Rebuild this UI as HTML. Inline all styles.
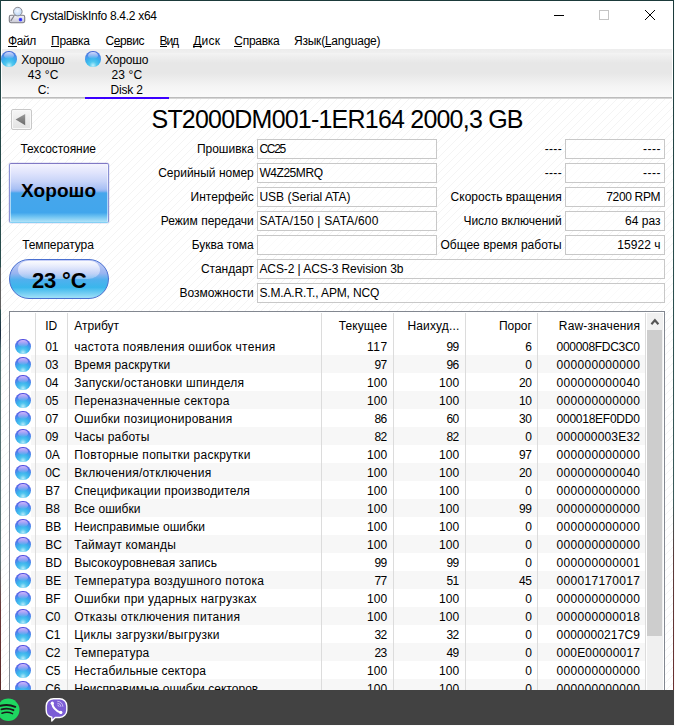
<!DOCTYPE html><html><head><meta charset="utf-8"><style>
*{margin:0;padding:0;box-sizing:border-box}
html,body{width:675px;height:726px;overflow:hidden;background:#fff;font-family:"Liberation Sans",sans-serif;}
.t{position:absolute;white-space:pre;color:#000;font-family:"Liberation Sans",sans-serif;}
</style></head><body><div style="position:absolute;left:0px;top:0px;width:674px;height:1px;background:#1b3a3a"></div>
<div style="position:absolute;left:0px;top:0px;width:1px;height:690px;background:linear-gradient(#1f4444 0px,#2a4e4e 267px,#606060 268px,#606060 309px,#2a5050 310px,#1a2a40 335px,#4a6a6a 350px,#5a7272 560px,#6a3434 610px,#5a2a2a 690px)"></div>
<div style="position:absolute;left:673px;top:0px;width:1px;height:690px;background:linear-gradient(#1b3a3a 0px,#2b4f4f 300px,#3a5a5a 500px,#5a3a3a 560px,#6a3030 690px)"></div>
<svg style="position:absolute;left:5px;top:5px" width="24" height="24" viewBox="0 0 24 24">
<defs><linearGradient id="dk" x1="0" y1="0" x2="0" y2="1"><stop offset="0" stop-color="#f4f4f8"/><stop offset="1" stop-color="#c8c8d4"/></linearGradient>
<radialGradient id="gl" cx="0.45" cy="0.4" r="0.6"><stop offset="0" stop-color="#f4f8ff"/><stop offset="1" stop-color="#b8d4f4"/></radialGradient></defs>
<rect x="4.3" y="10.3" width="15.4" height="7.4" rx="1.6" fill="url(#dk)" stroke="#7c7c84" stroke-width="1.1"/>
<defs><radialGradient id="bd"><stop offset="0" stop-color="#2020ff"/><stop offset="0.6" stop-color="#4848ff"/><stop offset="1" stop-color="#a0a8ff" stop-opacity="0.3"/></radialGradient></defs><circle cx="15.5" cy="14.6" r="2.3" fill="url(#bd)"/>
<line x1="9" y1="11" x2="5.8" y2="15.8" stroke="#808088" stroke-width="1.2"/>
<circle cx="12.8" cy="6.6" r="4.3" fill="url(#gl)" stroke="#8a8a90" stroke-width="1"/>
</svg>
<div class="t" style="left:30.50px;top:8.64px;font-size:12px;line-height:15px;letter-spacing:-0.288px;">CrystalDiskInfo 8.4.2 x64</div>
<div style="position:absolute;left:554px;top:15px;width:10px;height:1px;background:#000"></div>
<div style="position:absolute;left:599px;top:10px;width:10px;height:10px;border:1px solid #c4c4c4"></div>
<svg style="position:absolute;left:644px;top:9px" width="12" height="12" viewBox="0 0 12 12"><path d="M1 1L11 11M11 1L1 11" stroke="#000" stroke-width="1"/></svg>
<div class="t" style="left:8.10px;top:34.44px;font-size:12px;line-height:15px;letter-spacing:-0.433px;">Файл</div>
<div class="t" style="left:51.10px;top:34.44px;font-size:12px;line-height:15px;letter-spacing:-0.340px;">Правка</div>
<div class="t" style="left:105.60px;top:34.44px;font-size:12px;line-height:15px;letter-spacing:-0.460px;">Сервис</div>
<div class="t" style="left:159.60px;top:34.44px;font-size:12px;line-height:15px;letter-spacing:-1.200px;">Вид</div>
<div class="t" style="left:193.30px;top:34.44px;font-size:12px;line-height:15px;letter-spacing:0.167px;">Диск</div>
<div class="t" style="left:234.30px;top:34.44px;font-size:12px;line-height:15px;letter-spacing:-0.267px;">Справка</div>
<div class="t" style="left:294.00px;top:34.44px;font-size:12px;line-height:15px;letter-spacing:-0.223px;">Язык(Language)</div>
<div style="position:absolute;left:8px;top:46px;width:9px;height:1px;background:#000"></div>
<div style="position:absolute;left:51px;top:46px;width:8px;height:1px;background:#000"></div>
<div style="position:absolute;left:114px;top:46px;width:7px;height:1px;background:#000"></div>
<div style="position:absolute;left:160px;top:46px;width:7px;height:1px;background:#000"></div>
<div style="position:absolute;left:193px;top:46px;width:9px;height:1px;background:#000"></div>
<div style="position:absolute;left:234px;top:46px;width:8px;height:1px;background:#000"></div>
<div style="position:absolute;left:325px;top:46px;width:6px;height:1px;background:#000"></div>
<div style="position:absolute;left:2px;top:49px;width:670px;height:48px;background:linear-gradient(#ededed 0px,#efefef 3.5px,#f3f3f3 4.5px,#eeeeee 8px,#e7e7e7 14px,#e7e7e7 24px,#f5f5f5 38px,#fafafa 48px)"></div>
<div style="position:absolute;left:2px;top:97px;width:670px;height:1px;background:#bdbdbd"></div>
<div style="position:absolute;left:2px;top:98px;width:670px;height:1px;background:#d6d6d6"></div>
<div style="position:absolute;left:85px;top:97px;width:84px;height:2px;background:#3c00ff"></div>
<div style="position:absolute;left:1.3px;top:51.3px;width:15.6px;height:15.6px;border-radius:50%;background:radial-gradient(circle at 50% 90%, #c0f0fc 0%, #50c8ee 22%, #38b2ec 45%, #4a98ec 62%, #4a78e0 80%, #3a50c4 92%, #4a60d0 100%);"><div style="position:absolute;left:18%;top:6%;width:64%;height:46%;border-radius:50%;background:linear-gradient(#d4dcfc,rgba(170,190,250,0))"></div></div>
<div style="position:absolute;left:85.2px;top:51.3px;width:15.6px;height:15.6px;border-radius:50%;background:radial-gradient(circle at 50% 90%, #c0f0fc 0%, #50c8ee 22%, #38b2ec 45%, #4a98ec 62%, #4a78e0 80%, #3a50c4 92%, #4a60d0 100%);"><div style="position:absolute;left:18%;top:6%;width:64%;height:46%;border-radius:50%;background:linear-gradient(#d4dcfc,rgba(170,190,250,0))"></div></div>
<div class="t" style="left:21.30px;top:52.54px;font-size:12px;line-height:15px;letter-spacing:-0.180px;">Хорошо</div>
<div class="t" style="left:27.80px;top:67.54px;font-size:12px;line-height:15px;letter-spacing:0.100px;">43 °C</div>
<div class="t" style="left:37.70px;top:82.74px;font-size:12px;line-height:15px;">C:</div>
<div class="t" style="left:104.90px;top:52.54px;font-size:12px;line-height:15px;letter-spacing:-0.120px;">Хорошо</div>
<div class="t" style="left:111.40px;top:67.54px;font-size:12px;line-height:15px;letter-spacing:0.175px;">23 °C</div>
<div class="t" style="left:110.60px;top:82.74px;font-size:12px;line-height:15px;letter-spacing:-0.220px;">Disk 2</div>
<svg style="position:absolute;left:1px;top:99px" width="672" height="591"><defs><pattern id="stp" width="8" height="8" patternUnits="userSpaceOnUse"><path d="M7 0h1v1h-1zM6 1h1v1h-1zM5 2h1v1h-1zM4 3h1v1h-1zM3 4h1v1h-1zM2 5h1v1h-1zM1 6h1v1h-1zM0 7h1v1h-1z" fill="#f4f4f4"/></pattern></defs><rect width="672" height="591" fill="url(#stp)"/></svg>
<div style="position:absolute;left:11px;top:109px;width:21px;height:21px;background:linear-gradient(#f6f6f6,#e2e2e2);border:1px solid #c8c8c8;border-radius:2px;box-shadow:inset 0 0 0 1px #f8f8f8"></div>
<svg style="position:absolute;left:11px;top:109px" width="21" height="21"><defs><linearGradient id="tg" x1="0" y1="0" x2="0" y2="1"><stop offset="0" stop-color="#9a9a9a"/><stop offset="1" stop-color="#6a6a6a"/></linearGradient></defs><path d="M4.6 10.6L14.2 5V16.2Z" fill="url(#tg)"/></svg>
<div class="t" style="left:151.50px;top:103.84px;font-size:25px;line-height:31px;letter-spacing:-0.789px;">ST2000DM001-1ER164 2000,3 GB</div>
<div class="t" style="left:20.40px;top:142.14px;font-size:12px;line-height:15px;letter-spacing:-0.064px;">Техсостояние</div>
<div style="position:absolute;left:9px;top:163px;width:100px;height:60px;border:1px solid;border-radius:2px;box-shadow:inset 1px 0 0 rgba(255,255,255,0.55),inset -1px 0 0 rgba(255,255,255,0.55),0 0 0 0.5px rgba(140,140,210,0.35);border-color:#8078c4 #8a90d4 #84d0f4 #8a90d4;background:linear-gradient(#f4f4fe 0%,#e0e4fc 15%,#c8d4f8 30%,#a8c0f4 43%,#90b4f2 46.5%,#46a6ec 50%,#42a6ec 84%,#70c4f2 91%,#b0e2f8 100%)"></div>
<div class="t" style="left:21.10px;top:179.22px;font-size:19px;line-height:24px;font-weight:700;letter-spacing:0.060px;">Хорошо</div>
<div class="t" style="left:22.15px;top:238.04px;font-size:12px;line-height:15px;letter-spacing:-0.100px;">Температура</div>
<div style="position:absolute;left:9px;top:259px;width:100px;height:40px;border:1px solid #4a70d0;border-radius:20px;background:linear-gradient(#c8d0f8 0%,#98b4f0 35%,#50b0ee 52%,#3ab6ec 72%,#a0e0f8 100%)"></div>
<div style="position:absolute;left:18px;top:260.5px;width:82px;height:18px;border-radius:9px 9px 12px 12px/9px 9px 9px 9px;background:linear-gradient(rgba(255,255,255,0.9),rgba(240,242,255,0.55) 60%,rgba(220,228,252,0.35))"></div>
<div class="t" style="left:32.00px;top:267.28px;font-size:22px;line-height:28px;font-weight:700;letter-spacing:-0.175px;">23 °C</div>
<div class="t" style="left:196.90px;top:142.44px;font-size:12px;line-height:15px;">Прошивка</div>
<div style="position:absolute;left:257px;top:139px;width:180px;height:20px;border:1px solid #c8c8c8;background:rgba(255,255,255,0.55)"></div>
<div style="position:absolute;left:565px;top:139px;width:100px;height:20px;border:1px solid #c8c8c8;background:rgba(255,255,255,0.55)"></div>
<div class="t" style="left:544.70px;top:142.44px;font-size:12px;line-height:15px;letter-spacing:0.333px;">----</div>
<div class="t" style="left:642.90px;top:142.44px;font-size:12px;line-height:15px;letter-spacing:0.567px;">----</div>
<div class="t" style="left:259.40px;top:142.44px;font-size:12px;line-height:15px;letter-spacing:-1.267px;">CC25</div>
<div class="t" style="left:158.20px;top:166.44px;font-size:12px;line-height:15px;">Серийный номер</div>
<div style="position:absolute;left:257px;top:163px;width:180px;height:20px;border:1px solid #c8c8c8;background:rgba(255,255,255,0.55)"></div>
<div style="position:absolute;left:565px;top:163px;width:100px;height:20px;border:1px solid #c8c8c8;background:rgba(255,255,255,0.55)"></div>
<div class="t" style="left:544.70px;top:166.44px;font-size:12px;line-height:15px;letter-spacing:0.333px;">----</div>
<div class="t" style="left:642.90px;top:166.44px;font-size:12px;line-height:15px;letter-spacing:0.567px;">----</div>
<div class="t" style="left:259.40px;top:166.44px;font-size:12px;line-height:15px;letter-spacing:-0.443px;">W4Z25MRQ</div>
<div class="t" style="left:190.60px;top:190.44px;font-size:12px;line-height:15px;">Интерфейс</div>
<div style="position:absolute;left:257px;top:187px;width:180px;height:20px;border:1px solid #c8c8c8;background:rgba(255,255,255,0.55)"></div>
<div style="position:absolute;left:565px;top:187px;width:100px;height:20px;border:1px solid #c8c8c8;background:rgba(255,255,255,0.55)"></div>
<div class="t" style="left:450.60px;top:190.44px;font-size:12px;line-height:15px;">Скорость вращения</div>
<div class="t" style="left:606.20px;top:190.44px;font-size:12px;line-height:15px;letter-spacing:-0.329px;">7200 RPM</div>
<div class="t" style="left:259.40px;top:190.44px;font-size:12px;line-height:15px;letter-spacing:0.020px;">USB (Serial ATA)</div>
<div class="t" style="left:160.80px;top:214.44px;font-size:12px;line-height:15px;">Режим передачи</div>
<div style="position:absolute;left:257px;top:211px;width:180px;height:20px;border:1px solid #c8c8c8;background:rgba(255,255,255,0.55)"></div>
<div style="position:absolute;left:565px;top:211px;width:100px;height:20px;border:1px solid #c8c8c8;background:rgba(255,255,255,0.55)"></div>
<div class="t" style="left:463.40px;top:214.44px;font-size:12px;line-height:15px;">Число включений</div>
<div class="t" style="left:625.10px;top:214.44px;font-size:12px;line-height:15px;letter-spacing:0.020px;">64 раз</div>
<div class="t" style="left:259.40px;top:214.44px;font-size:12px;line-height:15px;letter-spacing:0.189px;">SATA/150 | SATA/600</div>
<div class="t" style="left:191.70px;top:238.44px;font-size:12px;line-height:15px;">Буква тома</div>
<div style="position:absolute;left:257px;top:235px;width:180px;height:20px;border:1px solid #c8c8c8;background:rgba(255,255,255,0.55)"></div>
<div style="position:absolute;left:565px;top:235px;width:100px;height:20px;border:1px solid #c8c8c8;background:rgba(255,255,255,0.55)"></div>
<div class="t" style="left:440.50px;top:238.44px;font-size:12px;line-height:15px;">Общее время работы</div>
<div class="t" style="left:617.20px;top:238.44px;font-size:12px;line-height:15px;letter-spacing:0.067px;">15922 ч</div>
<div class="t" style="left:200.90px;top:262.44px;font-size:12px;line-height:15px;">Стандарт</div>
<div style="position:absolute;left:257px;top:259px;width:408px;height:20px;border:1px solid #c8c8c8;background:rgba(255,255,255,0.55)"></div>
<div class="t" style="left:259.40px;top:262.44px;font-size:12px;line-height:15px;letter-spacing:-0.075px;">ACS-2 | ACS-3 Revision 3b</div>
<div class="t" style="left:179.40px;top:286.44px;font-size:12px;line-height:15px;">Возможности</div>
<div style="position:absolute;left:257px;top:283px;width:408px;height:20px;border:1px solid #c8c8c8;background:rgba(255,255,255,0.55)"></div>
<div class="t" style="left:259.40px;top:286.44px;font-size:12px;line-height:15px;letter-spacing:-0.142px;">S.M.A.R.T., APM, NCQ</div>
<div style="position:absolute;left:9px;top:311px;width:656px;height:379px;border:1px solid #828790;border-bottom:none;background:#fff"></div>
<div style="position:absolute;left:35px;top:313px;width:1px;height:377px;background:#dcdcdc"></div>
<div style="position:absolute;left:67px;top:313px;width:1px;height:377px;background:#dcdcdc"></div>
<div style="position:absolute;left:321px;top:313px;width:1px;height:377px;background:#dcdcdc"></div>
<div style="position:absolute;left:393px;top:313px;width:1px;height:377px;background:#dcdcdc"></div>
<div style="position:absolute;left:465px;top:313px;width:1px;height:377px;background:#dcdcdc"></div>
<div style="position:absolute;left:537px;top:313px;width:1px;height:377px;background:#dcdcdc"></div>
<div style="position:absolute;left:645px;top:313px;width:1px;height:377px;background:#dcdcdc"></div>
<div class="t" style="left:45.20px;top:318.94px;font-size:12px;line-height:15px;">ID</div>
<div class="t" style="left:74.30px;top:318.94px;font-size:12px;line-height:15px;">Атрибут</div>
<div class="t" style="left:338.70px;top:318.94px;font-size:12px;line-height:15px;letter-spacing:0.117px;">Текущее</div>
<div class="t" style="left:407.50px;top:318.94px;font-size:12px;line-height:15px;letter-spacing:0.138px;">Наихуд...</div>
<div class="t" style="left:498.90px;top:318.94px;font-size:12px;line-height:15px;">Порог</div>
<div class="t" style="left:558.80px;top:318.94px;font-size:12px;line-height:15px;letter-spacing:0.164px;">Raw-значения</div>
<div style="position:absolute;left:31px;top:355px;width:614px;height:18px;background:#f7f7f7"></div>
<div style="position:absolute;left:35px;top:355px;width:1px;height:18px;background:#dcdcdc"></div>
<div style="position:absolute;left:67px;top:355px;width:1px;height:18px;background:#dcdcdc"></div>
<div style="position:absolute;left:321px;top:355px;width:1px;height:18px;background:#dcdcdc"></div>
<div style="position:absolute;left:393px;top:355px;width:1px;height:18px;background:#dcdcdc"></div>
<div style="position:absolute;left:465px;top:355px;width:1px;height:18px;background:#dcdcdc"></div>
<div style="position:absolute;left:537px;top:355px;width:1px;height:18px;background:#dcdcdc"></div>
<div style="position:absolute;left:31px;top:391px;width:614px;height:18px;background:#f7f7f7"></div>
<div style="position:absolute;left:35px;top:391px;width:1px;height:18px;background:#dcdcdc"></div>
<div style="position:absolute;left:67px;top:391px;width:1px;height:18px;background:#dcdcdc"></div>
<div style="position:absolute;left:321px;top:391px;width:1px;height:18px;background:#dcdcdc"></div>
<div style="position:absolute;left:393px;top:391px;width:1px;height:18px;background:#dcdcdc"></div>
<div style="position:absolute;left:465px;top:391px;width:1px;height:18px;background:#dcdcdc"></div>
<div style="position:absolute;left:537px;top:391px;width:1px;height:18px;background:#dcdcdc"></div>
<div style="position:absolute;left:31px;top:427px;width:614px;height:18px;background:#f7f7f7"></div>
<div style="position:absolute;left:35px;top:427px;width:1px;height:18px;background:#dcdcdc"></div>
<div style="position:absolute;left:67px;top:427px;width:1px;height:18px;background:#dcdcdc"></div>
<div style="position:absolute;left:321px;top:427px;width:1px;height:18px;background:#dcdcdc"></div>
<div style="position:absolute;left:393px;top:427px;width:1px;height:18px;background:#dcdcdc"></div>
<div style="position:absolute;left:465px;top:427px;width:1px;height:18px;background:#dcdcdc"></div>
<div style="position:absolute;left:537px;top:427px;width:1px;height:18px;background:#dcdcdc"></div>
<div style="position:absolute;left:31px;top:463px;width:614px;height:18px;background:#f7f7f7"></div>
<div style="position:absolute;left:35px;top:463px;width:1px;height:18px;background:#dcdcdc"></div>
<div style="position:absolute;left:67px;top:463px;width:1px;height:18px;background:#dcdcdc"></div>
<div style="position:absolute;left:321px;top:463px;width:1px;height:18px;background:#dcdcdc"></div>
<div style="position:absolute;left:393px;top:463px;width:1px;height:18px;background:#dcdcdc"></div>
<div style="position:absolute;left:465px;top:463px;width:1px;height:18px;background:#dcdcdc"></div>
<div style="position:absolute;left:537px;top:463px;width:1px;height:18px;background:#dcdcdc"></div>
<div style="position:absolute;left:31px;top:499px;width:614px;height:18px;background:#f7f7f7"></div>
<div style="position:absolute;left:35px;top:499px;width:1px;height:18px;background:#dcdcdc"></div>
<div style="position:absolute;left:67px;top:499px;width:1px;height:18px;background:#dcdcdc"></div>
<div style="position:absolute;left:321px;top:499px;width:1px;height:18px;background:#dcdcdc"></div>
<div style="position:absolute;left:393px;top:499px;width:1px;height:18px;background:#dcdcdc"></div>
<div style="position:absolute;left:465px;top:499px;width:1px;height:18px;background:#dcdcdc"></div>
<div style="position:absolute;left:537px;top:499px;width:1px;height:18px;background:#dcdcdc"></div>
<div style="position:absolute;left:31px;top:535px;width:614px;height:18px;background:#f7f7f7"></div>
<div style="position:absolute;left:35px;top:535px;width:1px;height:18px;background:#dcdcdc"></div>
<div style="position:absolute;left:67px;top:535px;width:1px;height:18px;background:#dcdcdc"></div>
<div style="position:absolute;left:321px;top:535px;width:1px;height:18px;background:#dcdcdc"></div>
<div style="position:absolute;left:393px;top:535px;width:1px;height:18px;background:#dcdcdc"></div>
<div style="position:absolute;left:465px;top:535px;width:1px;height:18px;background:#dcdcdc"></div>
<div style="position:absolute;left:537px;top:535px;width:1px;height:18px;background:#dcdcdc"></div>
<div style="position:absolute;left:31px;top:571px;width:614px;height:18px;background:#f7f7f7"></div>
<div style="position:absolute;left:35px;top:571px;width:1px;height:18px;background:#dcdcdc"></div>
<div style="position:absolute;left:67px;top:571px;width:1px;height:18px;background:#dcdcdc"></div>
<div style="position:absolute;left:321px;top:571px;width:1px;height:18px;background:#dcdcdc"></div>
<div style="position:absolute;left:393px;top:571px;width:1px;height:18px;background:#dcdcdc"></div>
<div style="position:absolute;left:465px;top:571px;width:1px;height:18px;background:#dcdcdc"></div>
<div style="position:absolute;left:537px;top:571px;width:1px;height:18px;background:#dcdcdc"></div>
<div style="position:absolute;left:31px;top:607px;width:614px;height:18px;background:#f7f7f7"></div>
<div style="position:absolute;left:35px;top:607px;width:1px;height:18px;background:#dcdcdc"></div>
<div style="position:absolute;left:67px;top:607px;width:1px;height:18px;background:#dcdcdc"></div>
<div style="position:absolute;left:321px;top:607px;width:1px;height:18px;background:#dcdcdc"></div>
<div style="position:absolute;left:393px;top:607px;width:1px;height:18px;background:#dcdcdc"></div>
<div style="position:absolute;left:465px;top:607px;width:1px;height:18px;background:#dcdcdc"></div>
<div style="position:absolute;left:537px;top:607px;width:1px;height:18px;background:#dcdcdc"></div>
<div style="position:absolute;left:31px;top:643px;width:614px;height:18px;background:#f7f7f7"></div>
<div style="position:absolute;left:35px;top:643px;width:1px;height:18px;background:#dcdcdc"></div>
<div style="position:absolute;left:67px;top:643px;width:1px;height:18px;background:#dcdcdc"></div>
<div style="position:absolute;left:321px;top:643px;width:1px;height:18px;background:#dcdcdc"></div>
<div style="position:absolute;left:393px;top:643px;width:1px;height:18px;background:#dcdcdc"></div>
<div style="position:absolute;left:465px;top:643px;width:1px;height:18px;background:#dcdcdc"></div>
<div style="position:absolute;left:537px;top:643px;width:1px;height:18px;background:#dcdcdc"></div>
<div style="position:absolute;left:31px;top:679px;width:614px;height:18px;background:#f7f7f7"></div>
<div style="position:absolute;left:35px;top:679px;width:1px;height:18px;background:#dcdcdc"></div>
<div style="position:absolute;left:67px;top:679px;width:1px;height:18px;background:#dcdcdc"></div>
<div style="position:absolute;left:321px;top:679px;width:1px;height:18px;background:#dcdcdc"></div>
<div style="position:absolute;left:393px;top:679px;width:1px;height:18px;background:#dcdcdc"></div>
<div style="position:absolute;left:465px;top:679px;width:1px;height:18px;background:#dcdcdc"></div>
<div style="position:absolute;left:537px;top:679px;width:1px;height:18px;background:#dcdcdc"></div>
<div style="position:absolute;left:15.4px;top:338.6px;width:15.4px;height:15.4px;border-radius:50%;background:radial-gradient(circle at 50% 90%, #b8ecfa 0%, #50c4ee 22%, #38b0ec 42%, #4a8cec 60%, #5a64e8 78%, #4a34d4 90%, #5a3ed8 100%);"><div style="position:absolute;left:18%;top:6%;width:64%;height:46%;border-radius:50%;background:linear-gradient(#d0b8fc,rgba(180,150,250,0.1))"></div></div>
<div class="t" style="left:45.20px;top:339.74px;font-size:12px;line-height:15px;">01</div>
<div class="t" style="left:74.30px;top:339.74px;font-size:12px;line-height:15px;letter-spacing:0.297px;">частота появления ошибок чтения</div>
<div class="t" style="left:366.90px;top:339.74px;font-size:12px;line-height:15px;letter-spacing:0.600px;">117</div>
<div class="t" style="left:446.40px;top:339.74px;font-size:12px;line-height:15px;letter-spacing:-0.500px;">99</div>
<div class="t" style="left:525.20px;top:339.74px;font-size:12px;line-height:15px;">6</div>
<div class="t" style="left:556.60px;top:339.74px;font-size:12px;line-height:15px;letter-spacing:-0.309px;">000008FDC3C0</div>
<div style="position:absolute;left:15.4px;top:356.6px;width:15.4px;height:15.4px;border-radius:50%;background:radial-gradient(circle at 50% 90%, #b8ecfa 0%, #50c4ee 22%, #38b0ec 42%, #4a8cec 60%, #5a64e8 78%, #4a34d4 90%, #5a3ed8 100%);"><div style="position:absolute;left:18%;top:6%;width:64%;height:46%;border-radius:50%;background:linear-gradient(#d0b8fc,rgba(180,150,250,0.1))"></div></div>
<div class="t" style="left:45.20px;top:357.74px;font-size:12px;line-height:15px;">03</div>
<div class="t" style="left:74.30px;top:357.74px;font-size:12px;line-height:15px;letter-spacing:0.136px;">Время раскрутки</div>
<div class="t" style="left:374.40px;top:357.74px;font-size:12px;line-height:15px;letter-spacing:-0.500px;">97</div>
<div class="t" style="left:446.40px;top:357.74px;font-size:12px;line-height:15px;letter-spacing:-0.500px;">96</div>
<div class="t" style="left:525.20px;top:357.74px;font-size:12px;line-height:15px;">0</div>
<div class="t" style="left:556.60px;top:357.74px;font-size:12px;line-height:15px;letter-spacing:0.291px;">000000000000</div>
<div style="position:absolute;left:15.4px;top:374.6px;width:15.4px;height:15.4px;border-radius:50%;background:radial-gradient(circle at 50% 90%, #b8ecfa 0%, #50c4ee 22%, #38b0ec 42%, #4a8cec 60%, #5a64e8 78%, #4a34d4 90%, #5a3ed8 100%);"><div style="position:absolute;left:18%;top:6%;width:64%;height:46%;border-radius:50%;background:linear-gradient(#d0b8fc,rgba(180,150,250,0.1))"></div></div>
<div class="t" style="left:45.20px;top:375.74px;font-size:12px;line-height:15px;">04</div>
<div class="t" style="left:74.30px;top:375.74px;font-size:12px;line-height:15px;letter-spacing:0.252px;">Запуски/остановки шпинделя</div>
<div class="t" style="left:366.90px;top:375.74px;font-size:12px;line-height:15px;letter-spacing:0.150px;">100</div>
<div class="t" style="left:438.90px;top:375.74px;font-size:12px;line-height:15px;letter-spacing:0.150px;">100</div>
<div class="t" style="left:519.10px;top:375.74px;font-size:12px;line-height:15px;letter-spacing:-0.500px;">20</div>
<div class="t" style="left:556.60px;top:375.74px;font-size:12px;line-height:15px;letter-spacing:0.291px;">000000000040</div>
<div style="position:absolute;left:15.4px;top:392.6px;width:15.4px;height:15.4px;border-radius:50%;background:radial-gradient(circle at 50% 90%, #b8ecfa 0%, #50c4ee 22%, #38b0ec 42%, #4a8cec 60%, #5a64e8 78%, #4a34d4 90%, #5a3ed8 100%);"><div style="position:absolute;left:18%;top:6%;width:64%;height:46%;border-radius:50%;background:linear-gradient(#d0b8fc,rgba(180,150,250,0.1))"></div></div>
<div class="t" style="left:45.20px;top:393.74px;font-size:12px;line-height:15px;">05</div>
<div class="t" style="left:74.30px;top:393.74px;font-size:12px;line-height:15px;letter-spacing:0.291px;">Переназначенные сектора</div>
<div class="t" style="left:366.90px;top:393.74px;font-size:12px;line-height:15px;letter-spacing:0.150px;">100</div>
<div class="t" style="left:438.90px;top:393.74px;font-size:12px;line-height:15px;letter-spacing:0.150px;">100</div>
<div class="t" style="left:519.10px;top:393.74px;font-size:12px;line-height:15px;letter-spacing:-0.500px;">10</div>
<div class="t" style="left:556.60px;top:393.74px;font-size:12px;line-height:15px;letter-spacing:0.291px;">000000000000</div>
<div style="position:absolute;left:15.4px;top:410.6px;width:15.4px;height:15.4px;border-radius:50%;background:radial-gradient(circle at 50% 90%, #b8ecfa 0%, #50c4ee 22%, #38b0ec 42%, #4a8cec 60%, #5a64e8 78%, #4a34d4 90%, #5a3ed8 100%);"><div style="position:absolute;left:18%;top:6%;width:64%;height:46%;border-radius:50%;background:linear-gradient(#d0b8fc,rgba(180,150,250,0.1))"></div></div>
<div class="t" style="left:45.20px;top:411.74px;font-size:12px;line-height:15px;">07</div>
<div class="t" style="left:74.30px;top:411.74px;font-size:12px;line-height:15px;letter-spacing:0.236px;">Ошибки позиционирования</div>
<div class="t" style="left:374.40px;top:411.74px;font-size:12px;line-height:15px;letter-spacing:-0.500px;">86</div>
<div class="t" style="left:446.40px;top:411.74px;font-size:12px;line-height:15px;letter-spacing:-0.500px;">60</div>
<div class="t" style="left:519.10px;top:411.74px;font-size:12px;line-height:15px;letter-spacing:-0.500px;">30</div>
<div class="t" style="left:556.60px;top:411.74px;font-size:12px;line-height:15px;letter-spacing:-0.255px;">000018EF0DD0</div>
<div style="position:absolute;left:15.4px;top:428.6px;width:15.4px;height:15.4px;border-radius:50%;background:radial-gradient(circle at 50% 90%, #b8ecfa 0%, #50c4ee 22%, #38b0ec 42%, #4a8cec 60%, #5a64e8 78%, #4a34d4 90%, #5a3ed8 100%);"><div style="position:absolute;left:18%;top:6%;width:64%;height:46%;border-radius:50%;background:linear-gradient(#d0b8fc,rgba(180,150,250,0.1))"></div></div>
<div class="t" style="left:45.20px;top:429.74px;font-size:12px;line-height:15px;">09</div>
<div class="t" style="left:74.30px;top:429.74px;font-size:12px;line-height:15px;letter-spacing:0.170px;">Часы работы</div>
<div class="t" style="left:374.40px;top:429.74px;font-size:12px;line-height:15px;letter-spacing:-0.500px;">82</div>
<div class="t" style="left:446.40px;top:429.74px;font-size:12px;line-height:15px;letter-spacing:-0.500px;">82</div>
<div class="t" style="left:525.20px;top:429.74px;font-size:12px;line-height:15px;">0</div>
<div class="t" style="left:556.60px;top:429.74px;font-size:12px;line-height:15px;letter-spacing:0.173px;">000000003E32</div>
<div style="position:absolute;left:15.4px;top:446.6px;width:15.4px;height:15.4px;border-radius:50%;background:radial-gradient(circle at 50% 90%, #b8ecfa 0%, #50c4ee 22%, #38b0ec 42%, #4a8cec 60%, #5a64e8 78%, #4a34d4 90%, #5a3ed8 100%);"><div style="position:absolute;left:18%;top:6%;width:64%;height:46%;border-radius:50%;background:linear-gradient(#d0b8fc,rgba(180,150,250,0.1))"></div></div>
<div class="t" style="left:45.20px;top:447.74px;font-size:12px;line-height:15px;">0A</div>
<div class="t" style="left:74.30px;top:447.74px;font-size:12px;line-height:15px;letter-spacing:0.269px;">Повторные попытки раскрутки</div>
<div class="t" style="left:366.90px;top:447.74px;font-size:12px;line-height:15px;letter-spacing:0.150px;">100</div>
<div class="t" style="left:438.90px;top:447.74px;font-size:12px;line-height:15px;letter-spacing:0.150px;">100</div>
<div class="t" style="left:519.10px;top:447.74px;font-size:12px;line-height:15px;letter-spacing:-0.500px;">97</div>
<div class="t" style="left:556.60px;top:447.74px;font-size:12px;line-height:15px;letter-spacing:0.291px;">000000000000</div>
<div style="position:absolute;left:15.4px;top:464.6px;width:15.4px;height:15.4px;border-radius:50%;background:radial-gradient(circle at 50% 90%, #b8ecfa 0%, #50c4ee 22%, #38b0ec 42%, #4a8cec 60%, #5a64e8 78%, #4a34d4 90%, #5a3ed8 100%);"><div style="position:absolute;left:18%;top:6%;width:64%;height:46%;border-radius:50%;background:linear-gradient(#d0b8fc,rgba(180,150,250,0.1))"></div></div>
<div class="t" style="left:45.20px;top:465.74px;font-size:12px;line-height:15px;">0C</div>
<div class="t" style="left:74.30px;top:465.74px;font-size:12px;line-height:15px;letter-spacing:0.311px;">Включения/отключения</div>
<div class="t" style="left:366.90px;top:465.74px;font-size:12px;line-height:15px;letter-spacing:0.150px;">100</div>
<div class="t" style="left:438.90px;top:465.74px;font-size:12px;line-height:15px;letter-spacing:0.150px;">100</div>
<div class="t" style="left:519.10px;top:465.74px;font-size:12px;line-height:15px;letter-spacing:-0.500px;">20</div>
<div class="t" style="left:556.60px;top:465.74px;font-size:12px;line-height:15px;letter-spacing:0.291px;">000000000040</div>
<div style="position:absolute;left:15.4px;top:482.6px;width:15.4px;height:15.4px;border-radius:50%;background:radial-gradient(circle at 50% 90%, #b8ecfa 0%, #50c4ee 22%, #38b0ec 42%, #4a8cec 60%, #5a64e8 78%, #4a34d4 90%, #5a3ed8 100%);"><div style="position:absolute;left:18%;top:6%;width:64%;height:46%;border-radius:50%;background:linear-gradient(#d0b8fc,rgba(180,150,250,0.1))"></div></div>
<div class="t" style="left:45.20px;top:483.74px;font-size:12px;line-height:15px;">B7</div>
<div class="t" style="left:74.30px;top:483.74px;font-size:12px;line-height:15px;letter-spacing:0.168px;">Спецификации производителя</div>
<div class="t" style="left:366.90px;top:483.74px;font-size:12px;line-height:15px;letter-spacing:0.150px;">100</div>
<div class="t" style="left:438.90px;top:483.74px;font-size:12px;line-height:15px;letter-spacing:0.150px;">100</div>
<div class="t" style="left:525.20px;top:483.74px;font-size:12px;line-height:15px;">0</div>
<div class="t" style="left:556.60px;top:483.74px;font-size:12px;line-height:15px;letter-spacing:0.291px;">000000000000</div>
<div style="position:absolute;left:15.4px;top:500.6px;width:15.4px;height:15.4px;border-radius:50%;background:radial-gradient(circle at 50% 90%, #b8ecfa 0%, #50c4ee 22%, #38b0ec 42%, #4a8cec 60%, #5a64e8 78%, #4a34d4 90%, #5a3ed8 100%);"><div style="position:absolute;left:18%;top:6%;width:64%;height:46%;border-radius:50%;background:linear-gradient(#d0b8fc,rgba(180,150,250,0.1))"></div></div>
<div class="t" style="left:45.20px;top:501.74px;font-size:12px;line-height:15px;">B8</div>
<div class="t" style="left:74.30px;top:501.74px;font-size:12px;line-height:15px;letter-spacing:0.033px;">Все ошибки</div>
<div class="t" style="left:366.90px;top:501.74px;font-size:12px;line-height:15px;letter-spacing:0.150px;">100</div>
<div class="t" style="left:438.90px;top:501.74px;font-size:12px;line-height:15px;letter-spacing:0.150px;">100</div>
<div class="t" style="left:519.10px;top:501.74px;font-size:12px;line-height:15px;letter-spacing:-0.500px;">99</div>
<div class="t" style="left:556.60px;top:501.74px;font-size:12px;line-height:15px;letter-spacing:0.291px;">000000000000</div>
<div style="position:absolute;left:15.4px;top:518.6px;width:15.4px;height:15.4px;border-radius:50%;background:radial-gradient(circle at 50% 90%, #b8ecfa 0%, #50c4ee 22%, #38b0ec 42%, #4a8cec 60%, #5a64e8 78%, #4a34d4 90%, #5a3ed8 100%);"><div style="position:absolute;left:18%;top:6%;width:64%;height:46%;border-radius:50%;background:linear-gradient(#d0b8fc,rgba(180,150,250,0.1))"></div></div>
<div class="t" style="left:45.20px;top:519.74px;font-size:12px;line-height:15px;">BB</div>
<div class="t" style="left:74.30px;top:519.74px;font-size:12px;line-height:15px;letter-spacing:0.061px;">Неисправимые ошибки</div>
<div class="t" style="left:366.90px;top:519.74px;font-size:12px;line-height:15px;letter-spacing:0.150px;">100</div>
<div class="t" style="left:438.90px;top:519.74px;font-size:12px;line-height:15px;letter-spacing:0.150px;">100</div>
<div class="t" style="left:525.20px;top:519.74px;font-size:12px;line-height:15px;">0</div>
<div class="t" style="left:556.60px;top:519.74px;font-size:12px;line-height:15px;letter-spacing:0.291px;">000000000000</div>
<div style="position:absolute;left:15.4px;top:536.6px;width:15.4px;height:15.4px;border-radius:50%;background:radial-gradient(circle at 50% 90%, #b8ecfa 0%, #50c4ee 22%, #38b0ec 42%, #4a8cec 60%, #5a64e8 78%, #4a34d4 90%, #5a3ed8 100%);"><div style="position:absolute;left:18%;top:6%;width:64%;height:46%;border-radius:50%;background:linear-gradient(#d0b8fc,rgba(180,150,250,0.1))"></div></div>
<div class="t" style="left:45.20px;top:537.74px;font-size:12px;line-height:15px;">BC</div>
<div class="t" style="left:74.30px;top:537.74px;font-size:12px;line-height:15px;letter-spacing:0.179px;">Таймаут команды</div>
<div class="t" style="left:366.90px;top:537.74px;font-size:12px;line-height:15px;letter-spacing:0.150px;">100</div>
<div class="t" style="left:438.90px;top:537.74px;font-size:12px;line-height:15px;letter-spacing:0.150px;">100</div>
<div class="t" style="left:525.20px;top:537.74px;font-size:12px;line-height:15px;">0</div>
<div class="t" style="left:556.60px;top:537.74px;font-size:12px;line-height:15px;letter-spacing:0.291px;">000000000000</div>
<div style="position:absolute;left:15.4px;top:554.6px;width:15.4px;height:15.4px;border-radius:50%;background:radial-gradient(circle at 50% 90%, #b8ecfa 0%, #50c4ee 22%, #38b0ec 42%, #4a8cec 60%, #5a64e8 78%, #4a34d4 90%, #5a3ed8 100%);"><div style="position:absolute;left:18%;top:6%;width:64%;height:46%;border-radius:50%;background:linear-gradient(#d0b8fc,rgba(180,150,250,0.1))"></div></div>
<div class="t" style="left:45.20px;top:555.74px;font-size:12px;line-height:15px;">BD</div>
<div class="t" style="left:74.30px;top:555.74px;font-size:12px;line-height:15px;letter-spacing:0.095px;">Высокоуровневая запись</div>
<div class="t" style="left:374.40px;top:555.74px;font-size:12px;line-height:15px;letter-spacing:-0.500px;">99</div>
<div class="t" style="left:446.40px;top:555.74px;font-size:12px;line-height:15px;letter-spacing:-0.500px;">99</div>
<div class="t" style="left:525.20px;top:555.74px;font-size:12px;line-height:15px;">0</div>
<div class="t" style="left:556.60px;top:555.74px;font-size:12px;line-height:15px;letter-spacing:0.291px;">000000000001</div>
<div style="position:absolute;left:15.4px;top:572.6px;width:15.4px;height:15.4px;border-radius:50%;background:radial-gradient(circle at 50% 90%, #b8ecfa 0%, #50c4ee 22%, #38b0ec 42%, #4a8cec 60%, #5a64e8 78%, #4a34d4 90%, #5a3ed8 100%);"><div style="position:absolute;left:18%;top:6%;width:64%;height:46%;border-radius:50%;background:linear-gradient(#d0b8fc,rgba(180,150,250,0.1))"></div></div>
<div class="t" style="left:45.20px;top:573.74px;font-size:12px;line-height:15px;">BE</div>
<div class="t" style="left:74.30px;top:573.74px;font-size:12px;line-height:15px;letter-spacing:0.304px;">Температура воздушного потока</div>
<div class="t" style="left:374.40px;top:573.74px;font-size:12px;line-height:15px;letter-spacing:-0.500px;">77</div>
<div class="t" style="left:446.40px;top:573.74px;font-size:12px;line-height:15px;letter-spacing:-0.500px;">51</div>
<div class="t" style="left:519.10px;top:573.74px;font-size:12px;line-height:15px;letter-spacing:-0.500px;">45</div>
<div class="t" style="left:556.60px;top:573.74px;font-size:12px;line-height:15px;letter-spacing:0.291px;">000017170017</div>
<div style="position:absolute;left:15.4px;top:590.6px;width:15.4px;height:15.4px;border-radius:50%;background:radial-gradient(circle at 50% 90%, #b8ecfa 0%, #50c4ee 22%, #38b0ec 42%, #4a8cec 60%, #5a64e8 78%, #4a34d4 90%, #5a3ed8 100%);"><div style="position:absolute;left:18%;top:6%;width:64%;height:46%;border-radius:50%;background:linear-gradient(#d0b8fc,rgba(180,150,250,0.1))"></div></div>
<div class="t" style="left:45.20px;top:591.74px;font-size:12px;line-height:15px;">BF</div>
<div class="t" style="left:74.30px;top:591.74px;font-size:12px;line-height:15px;letter-spacing:0.252px;">Ошибки при ударных нагрузках</div>
<div class="t" style="left:366.90px;top:591.74px;font-size:12px;line-height:15px;letter-spacing:0.150px;">100</div>
<div class="t" style="left:438.90px;top:591.74px;font-size:12px;line-height:15px;letter-spacing:0.150px;">100</div>
<div class="t" style="left:525.20px;top:591.74px;font-size:12px;line-height:15px;">0</div>
<div class="t" style="left:556.60px;top:591.74px;font-size:12px;line-height:15px;letter-spacing:0.291px;">000000000000</div>
<div style="position:absolute;left:15.4px;top:608.6px;width:15.4px;height:15.4px;border-radius:50%;background:radial-gradient(circle at 50% 90%, #b8ecfa 0%, #50c4ee 22%, #38b0ec 42%, #4a8cec 60%, #5a64e8 78%, #4a34d4 90%, #5a3ed8 100%);"><div style="position:absolute;left:18%;top:6%;width:64%;height:46%;border-radius:50%;background:linear-gradient(#d0b8fc,rgba(180,150,250,0.1))"></div></div>
<div class="t" style="left:45.20px;top:609.74px;font-size:12px;line-height:15px;">C0</div>
<div class="t" style="left:74.30px;top:609.74px;font-size:12px;line-height:15px;letter-spacing:0.296px;">Отказы отключения питания</div>
<div class="t" style="left:366.90px;top:609.74px;font-size:12px;line-height:15px;letter-spacing:0.150px;">100</div>
<div class="t" style="left:438.90px;top:609.74px;font-size:12px;line-height:15px;letter-spacing:0.150px;">100</div>
<div class="t" style="left:525.20px;top:609.74px;font-size:12px;line-height:15px;">0</div>
<div class="t" style="left:556.60px;top:609.74px;font-size:12px;line-height:15px;letter-spacing:0.291px;">000000000018</div>
<div style="position:absolute;left:15.4px;top:626.6px;width:15.4px;height:15.4px;border-radius:50%;background:radial-gradient(circle at 50% 90%, #b8ecfa 0%, #50c4ee 22%, #38b0ec 42%, #4a8cec 60%, #5a64e8 78%, #4a34d4 90%, #5a3ed8 100%);"><div style="position:absolute;left:18%;top:6%;width:64%;height:46%;border-radius:50%;background:linear-gradient(#d0b8fc,rgba(180,150,250,0.1))"></div></div>
<div class="t" style="left:45.20px;top:627.74px;font-size:12px;line-height:15px;">C1</div>
<div class="t" style="left:74.30px;top:627.74px;font-size:12px;line-height:15px;letter-spacing:0.273px;">Циклы загрузки/выгрузки</div>
<div class="t" style="left:374.40px;top:627.74px;font-size:12px;line-height:15px;letter-spacing:-0.500px;">32</div>
<div class="t" style="left:446.40px;top:627.74px;font-size:12px;line-height:15px;letter-spacing:-0.500px;">32</div>
<div class="t" style="left:525.20px;top:627.74px;font-size:12px;line-height:15px;">0</div>
<div class="t" style="left:556.60px;top:627.74px;font-size:12px;line-height:15px;letter-spacing:0.109px;">0000000217C9</div>
<div style="position:absolute;left:15.4px;top:644.6px;width:15.4px;height:15.4px;border-radius:50%;background:radial-gradient(circle at 50% 90%, #b8ecfa 0%, #50c4ee 22%, #38b0ec 42%, #4a8cec 60%, #5a64e8 78%, #4a34d4 90%, #5a3ed8 100%);"><div style="position:absolute;left:18%;top:6%;width:64%;height:46%;border-radius:50%;background:linear-gradient(#d0b8fc,rgba(180,150,250,0.1))"></div></div>
<div class="t" style="left:45.20px;top:645.74px;font-size:12px;line-height:15px;">C2</div>
<div class="t" style="left:74.30px;top:645.74px;font-size:12px;line-height:15px;letter-spacing:0.230px;">Температура</div>
<div class="t" style="left:374.40px;top:645.74px;font-size:12px;line-height:15px;letter-spacing:-0.500px;">23</div>
<div class="t" style="left:446.40px;top:645.74px;font-size:12px;line-height:15px;letter-spacing:-0.500px;">49</div>
<div class="t" style="left:525.20px;top:645.74px;font-size:12px;line-height:15px;">0</div>
<div class="t" style="left:556.60px;top:645.74px;font-size:12px;line-height:15px;letter-spacing:0.173px;">000E00000017</div>
<div style="position:absolute;left:15.4px;top:662.6px;width:15.4px;height:15.4px;border-radius:50%;background:radial-gradient(circle at 50% 90%, #b8ecfa 0%, #50c4ee 22%, #38b0ec 42%, #4a8cec 60%, #5a64e8 78%, #4a34d4 90%, #5a3ed8 100%);"><div style="position:absolute;left:18%;top:6%;width:64%;height:46%;border-radius:50%;background:linear-gradient(#d0b8fc,rgba(180,150,250,0.1))"></div></div>
<div class="t" style="left:45.20px;top:663.74px;font-size:12px;line-height:15px;">C5</div>
<div class="t" style="left:74.30px;top:663.74px;font-size:12px;line-height:15px;letter-spacing:0.142px;">Нестабильные сектора</div>
<div class="t" style="left:366.90px;top:663.74px;font-size:12px;line-height:15px;letter-spacing:0.150px;">100</div>
<div class="t" style="left:438.90px;top:663.74px;font-size:12px;line-height:15px;letter-spacing:0.150px;">100</div>
<div class="t" style="left:525.20px;top:663.74px;font-size:12px;line-height:15px;">0</div>
<div class="t" style="left:556.60px;top:663.74px;font-size:12px;line-height:15px;letter-spacing:0.291px;">000000000000</div>
<div style="position:absolute;left:15.4px;top:680.6px;width:15.4px;height:15.4px;border-radius:50%;background:radial-gradient(circle at 50% 90%, #b8ecfa 0%, #50c4ee 22%, #38b0ec 42%, #4a8cec 60%, #5a64e8 78%, #4a34d4 90%, #5a3ed8 100%);"><div style="position:absolute;left:18%;top:6%;width:64%;height:46%;border-radius:50%;background:linear-gradient(#d0b8fc,rgba(180,150,250,0.1))"></div></div>
<div class="t" style="left:45.20px;top:681.74px;font-size:12px;line-height:15px;">C6</div>
<div class="t" style="left:74.30px;top:681.74px;font-size:12px;line-height:15px;letter-spacing:0.041px;">Неисправимые ошибки секторов</div>
<div class="t" style="left:366.90px;top:681.74px;font-size:12px;line-height:15px;letter-spacing:0.150px;">100</div>
<div class="t" style="left:438.90px;top:681.74px;font-size:12px;line-height:15px;letter-spacing:0.150px;">100</div>
<div class="t" style="left:525.20px;top:681.74px;font-size:12px;line-height:15px;">0</div>
<div class="t" style="left:556.60px;top:681.74px;font-size:12px;line-height:15px;letter-spacing:0.291px;">000000000000</div>
<div style="position:absolute;left:647px;top:313px;width:16px;height:377px;background:#f0f0f0"></div>
<svg style="position:absolute;left:647px;top:313px" width="16" height="17"><path d="M4.4 11.2L7.9 7.2L11.4 11.2" stroke="#555" stroke-width="2.1" fill="none"/></svg>
<div style="position:absolute;left:647px;top:330px;width:15px;height:306px;background:#cdcdcd"></div>
<div style="position:absolute;left:0px;top:690px;width:674px;height:35px;background:#424242"></div>
<svg style="position:absolute;left:0;top:690px" width="80" height="35" viewBox="0 0 80 35">
<circle cx="8.3" cy="19.8" r="11.2" fill="#1ed760"/>
<path d="M0.5 15.8 Q8 13.6 15.2 16.8" stroke="#1a1a1a" stroke-width="2.0" fill="none" stroke-linecap="round"/>
<path d="M1.5 19.4 Q7.5 17.6 13.5 20.2" stroke="#1a1a1a" stroke-width="1.8" fill="none" stroke-linecap="round"/>
<path d="M2 23.2 Q7.5 21.2 12.5 23.6" stroke="#1a1a1a" stroke-width="1.5" fill="none" stroke-linecap="round"/>
<path d="M53.5 8.7 h6 a7.3 7.3 0 0 1 7.3 7.3 v4.2 a7.3 7.3 0 0 1 -7.3 7.3 h-4.3 l-3.4 3.4 v-3.6 a7.3 7.3 0 0 1 -5.6 -7.1 v-4.2 a7.3 7.3 0 0 1 7.3 -7.3 z" fill="#7b5dd6" stroke="#fff" stroke-width="1.4" stroke-linejoin="round"/>
<path d="M52.2 13.6 Q53.2 19.6 60.6 22.6" stroke="#fff" stroke-width="2.1" fill="none" stroke-linecap="round"/>
<circle cx="52.3" cy="13.2" r="1.6" fill="#fff"/><circle cx="60.8" cy="22.4" r="1.6" fill="#fff"/>
<path d="M57.3 11.3 a6 6 0 0 1 5.6 5.4 M57.3 13.2 a4 4 0 0 1 3.7 3.6 M57.4 15 a2.2 2.2 0 0 1 1.8 1.8" stroke="#e8e0fa" stroke-width="0.7" fill="none"/>
</svg>
<div style="position:absolute;left:674px;top:0px;width:1px;height:726px;background:#fafafa"></div>
<div style="position:absolute;left:0px;top:725px;width:675px;height:1px;background:#fafafa"></div></body></html>
